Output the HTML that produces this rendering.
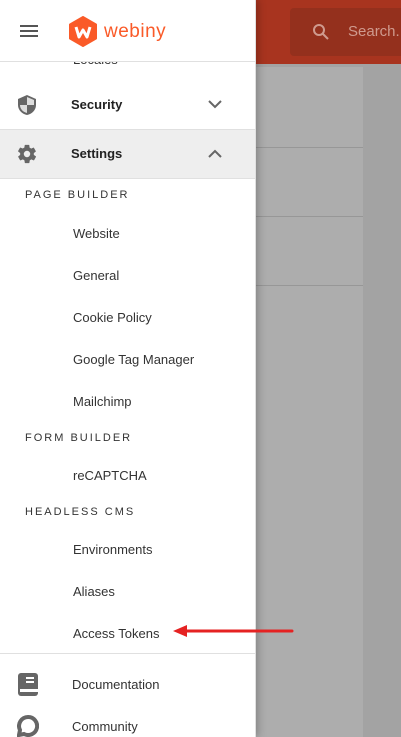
<!DOCTYPE html>
<html><head><style>
html,body{margin:0;width:401px;height:737px;overflow:hidden}
body{position:relative;font-family:"Liberation Sans",sans-serif;background:#a3a3a3}
.hdr{position:absolute;left:0;top:0;width:401px;height:64px;background:#a8341f}
.search{position:absolute;left:290px;top:8px;width:120px;height:48px;background:#94301d;border-radius:4px;color:#cf9a8e;font-size:15px}
.card{position:absolute;left:256px;top:67px;width:107px;height:670px;background:#adadad}
.ln{position:absolute;left:256px;width:107px;height:1px;background:#979797}
.drawer{position:absolute;left:0;top:0;width:255px;height:737px;background:#fff;border-right:1px solid #e0e0e0;box-shadow:2px 0 8px rgba(0,0,0,.25);overflow:hidden}
.t{position:absolute;font-size:13px;color:#333;white-space:nowrap}
.b{font-weight:bold;font-size:13px;color:#222}
.sec{position:absolute;left:25px;font-size:11px;letter-spacing:2px;color:#333}
.div{position:absolute;left:0;width:255px;height:1px;background:#e0e0e0}
</style></head><body>
<div class="hdr"></div>
<div class="search"><svg style="position:absolute;left:22px;top:15px" width="18" height="18" viewBox="0 0 18 18"><circle cx="7" cy="7" r="5" fill="none" stroke="#cf9a8e" stroke-width="2"/><path d="M11 11l5 5" stroke="#cf9a8e" stroke-width="2"/></svg><span style="position:absolute;left:58px;top:15px">Search...</span></div>
<div class="card"></div>
<div class="ln" style="top:147px"></div><div class="ln" style="top:216px"></div><div class="ln" style="top:285px"></div>
<div class="drawer">
<div style="position:absolute;left:0;top:62px;width:255px;height:20px;overflow:hidden"><div class="t" style="left:73px;top:-10px">Locales</div></div>
<div style="position:absolute;left:20px;top:25px;width:18px;height:2px;background:#555;box-shadow:0 5px 0 #555,0 10px 0 #555"></div>
<svg style="position:absolute;left:68px;top:16px" width="30" height="31" viewBox="0 0 30 31"><path d="M15 1L28 8.5V22.5L15 30L2 22.5V8.5Z" fill="#fa5a28" stroke="#fa5a28" stroke-width="2" stroke-linejoin="round"/><path d="M8 11l3 10 4-7 4 7 3-10" fill="none" stroke="#fff" stroke-width="3" stroke-linejoin="round"/></svg>
<span style="position:absolute;left:104px;top:21px;font-size:19px;color:#fa5a28;letter-spacing:0.5px">webiny</span>
<div class="div" style="top:61px"></div>
<svg style="position:absolute;left:17px;top:94px" width="20" height="22" viewBox="0 0 20 22"><path d="M10 1L19 5v6c0 5-4 9-9 10C5 20 1 16 1 11V5z" fill="#666"/><path d="M10 3v8H3c0 4 3 7 7 8v-8h7V6z" fill="#ddd"/></svg>
<div class="t b" style="left:71px;top:97px">Security</div>
<svg style="position:absolute;left:208px;top:100px" width="14" height="9" viewBox="0 0 14 9"><path d="M1 1l6 6 6-6" fill="none" stroke="#666" stroke-width="2"/></svg>
<div class="div" style="top:129px"></div>
<div style="position:absolute;left:0;top:130px;width:255px;height:48px;background:#eee"></div>
<svg style="position:absolute;left:16px;top:143px" width="22" height="22" viewBox="0 0 24 24"><path fill="#666" d="M19.4 13c.04-.3.1-.7.1-1s-.03-.7-.1-1l2.1-1.6c.2-.15.24-.4.1-.6l-2-3.5c-.1-.2-.4-.3-.6-.2l-2.5 1c-.5-.4-1.1-.7-1.700-1L14.5 2.4c0-.2-.2-.4-.5-.4h-4c-.25 0-.46.18-.5.42l-.4 2.6c-.6.25-1.200.6-1.700 1l-2.500-1c-.2-.1-.5 0-.6.2l-2 3.5c-.1.2-.1.5.1.6L4.6 11c0 .3-.1.7-.1 1s0 .7.1 1l-2.1 1.6c-.2.15-.2.4-.1.6l2 3.5c.1.2.4.3.6.2l2.5-1c.5.4 1.1.7 1.7 1l.4 2.6c0 .2.2.4.5.4h4c.25 0 .46-.2.5-.4l.4-2.6c.6-.25 1.2-.6 1.7-1l2.5 1c.2.1.5 0 .6-.2l2-3.5c.1-.2.1-.5-.1-.6zM12 15.5a3.5 3.5 0 110-7 3.5 3.5 0 010 7z"/></svg>
<div class="t b" style="left:71px;top:146px">Settings</div>
<svg style="position:absolute;left:208px;top:149px" width="14" height="9" viewBox="0 0 14 9"><path d="M1 8l6-6 6 6" fill="none" stroke="#666" stroke-width="2"/></svg>
<div class="div" style="top:178px"></div>
<div class="sec" style="top:189px">PAGE BUILDER</div>
<div class="t" style="left:73px;top:226px">Website</div>
<div class="t" style="left:73px;top:268px">General</div>
<div class="t" style="left:73px;top:310px">Cookie Policy</div>
<div class="t" style="left:73px;top:352px">Google Tag Manager</div>
<div class="t" style="left:73px;top:394px">Mailchimp</div>
<div class="sec" style="top:432px">FORM BUILDER</div>
<div class="t" style="left:73px;top:468px">reCAPTCHA</div>
<div class="sec" style="top:506px">HEADLESS CMS</div>
<div class="t" style="left:73px;top:542px">Environments</div>
<div class="t" style="left:73px;top:584px">Aliases</div>
<div class="t" style="left:73px;top:626px">Access Tokens</div>
<div class="div" style="top:653px"></div>
<svg style="position:absolute;left:18px;top:673px" width="20" height="23" viewBox="0 0 20 23"><rect x="0" y="0" width="20" height="23" rx="3" fill="#666"/><rect x="8" y="4" width="8" height="2" fill="#fff"/><rect x="8" y="8" width="8" height="2" fill="#fff"/><rect x="2" y="16" width="18" height="3" fill="#fff"/></svg>
<div class="t" style="left:72px;top:677px">Documentation</div>
<svg style="position:absolute;left:17px;top:715px" width="22" height="22" viewBox="0 0 22 22"><path d="M11 2a9 9 0 00-8 13l-1 5 5-1A9 9 0 1011 2z" fill="none" stroke="#666" stroke-width="4"/></svg>
<div class="t" style="left:72px;top:719px">Community</div>
</div>
<svg style="position:absolute;left:170px;top:624px" width="125" height="14" viewBox="0 0 125 14"><path d="M14 7H122" stroke="#e52222" stroke-width="3" stroke-linecap="round"/><path d="M3 7l14-6v12z" fill="#e52222"/></svg>
</body></html>
